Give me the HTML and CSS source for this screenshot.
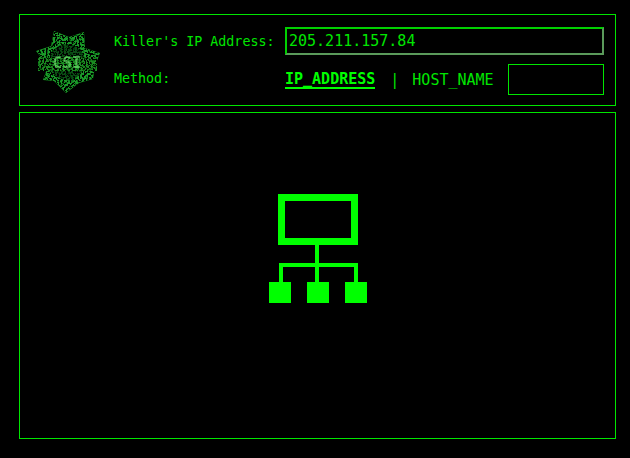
FILE: index.html
```html
<!DOCTYPE html>
<html lang="en">
<head>
  <meta charset="UTF-8">
  <title>Trace Killer IP</title>
  <link rel="stylesheet" href="styles.css">
</head>
<body>

  <div class="header-box">
    <svg class="badge" width="68" height="66" viewBox="33 28 68 66" aria-hidden="true">
      <defs>
        <filter id="speckle" x="0" y="0" width="100%" height="100%">
          <feTurbulence type="fractalNoise" baseFrequency="0.55" numOctaves="2" seed="7"/>
          <feColorMatrix values="0 0 0 0 0  0 0 0 0 0  0 0 0 0 0  0 0 0 9 -4.1"/>
          <feComposite in2="SourceGraphic" operator="in"/>
          <feMerge>
            <feMergeNode in="SourceGraphic"/>
            <feMergeNode/>
          </feMerge>
        </filter>
      </defs>
      <g filter="url(#speckle)">
        <polygon fill="#1f9a2a" points="53,30 68,36 83,31 84,47 99,52 94,65 92,78 78,82 65,92 53,80 42,79 47,65 35,50 50,45"/>
        <circle cx="66" cy="61" r="18" fill="#0b4d12"/>
        <rect x="37" y="56" width="59" height="14" fill="#1a8a24"/>
      </g>
      <text class="badge-text" x="66" y="67" text-anchor="middle">CSI</text>
    </svg>

    <div class="fields">
      <div class="field-row">
        <span class="field-label">Killer's IP Address:</span>
        <input class="ip-input" type="text" value="205.211.157.84">
      </div>
      <div class="field-row method-row">
        <span class="field-label">Method:</span>
        <div class="method-options">
          <span class="method-active">IP_ADDRESS</span>
          <span class="method-sep">|</span>
          <span class="method-other">HOST_NAME</span>
          <div class="method-box"></div>
        </div>
      </div>
    </div>
  </div>

  <div class="main-box">
    <svg class="network-icon" width="98" height="109" viewBox="0 0 98 109" aria-hidden="true">
      <rect x="12.5" y="3.5" width="73" height="44" fill="none" stroke="#00ff00" stroke-width="7"/>
      <path d="M48 50V89M12 89V71H87V89" fill="none" stroke="#00ff00" stroke-width="4"/>
      <rect x="0" y="88" width="22" height="21" fill="#00ff00"/>
      <rect x="38" y="88" width="22" height="21" fill="#00ff00"/>
      <rect x="76" y="88" width="22" height="21" fill="#00ff00"/>
    </svg>
  </div>

</body>
</html>
```

FILE: styles.css
```css
html, body {
  height: 100%;
}
body {
  margin: 0;
  padding: 14px 14px 19px 19px;
  box-sizing: border-box;
  background: #000;
  color: #00e600;
  font-family: "DejaVu Sans Mono", monospace;
  display: flex;
  flex-direction: column;
  gap: 6px;
  overflow: hidden;
}
.header-box {
  height: 92px;
  box-sizing: border-box;
  border: 1px solid #00e600;
  display: flex;
  padding: 12px 11px 0 14px;
  gap: 12px;
}
.badge {
  margin-top: 2px;
  flex: none;
}
.badge-text {
  font-family: "DejaVu Sans Mono", monospace;
  font-size: 16px;
  font-weight: bold;
  fill: #7dff7d;
  opacity: 0.55;
}
.fields {
  flex: 1;
  display: flex;
  flex-direction: column;
  gap: 9px;
}
.field-row {
  display: flex;
  align-items: center;
  justify-content: space-between;
}
.field-label {
  font-size: 13.33px;
}
.ip-input {
  width: 319px;
  height: 28px;
  box-sizing: border-box;
  padding: 0 2px;
  background: #000;
  color: #00e600;
  border: 2px solid;
  border-color: #00d000 #5a9a5a #5a9a5a #00d000;
  font-family: "DejaVu Sans Mono", monospace;
  font-size: 15px;
  outline: none;
}
.method-row .field-label {
  align-self: flex-start;
  margin-top: 7px;
}
.method-options {
  width: 319px;
  display: flex;
  align-items: center;
  font-size: 15px;
}
.method-active {
  font-weight: bold;
  color: #00ff00;
  border-bottom: 2px solid #00ff00;
  line-height: 16px;
}
.method-sep {
  margin-left: 15px;
}
.method-other {
  margin-left: 13px;
}
.method-box {
  width: 96px;
  height: 31px;
  box-sizing: border-box;
  border: 1px solid #00e600;
  margin-left: auto;
}
.main-box {
  flex: 1;
  box-sizing: border-box;
  border: 1px solid #00e600;
  display: flex;
  justify-content: center;
  align-items: flex-start;
  padding-top: 81px;
}
```
